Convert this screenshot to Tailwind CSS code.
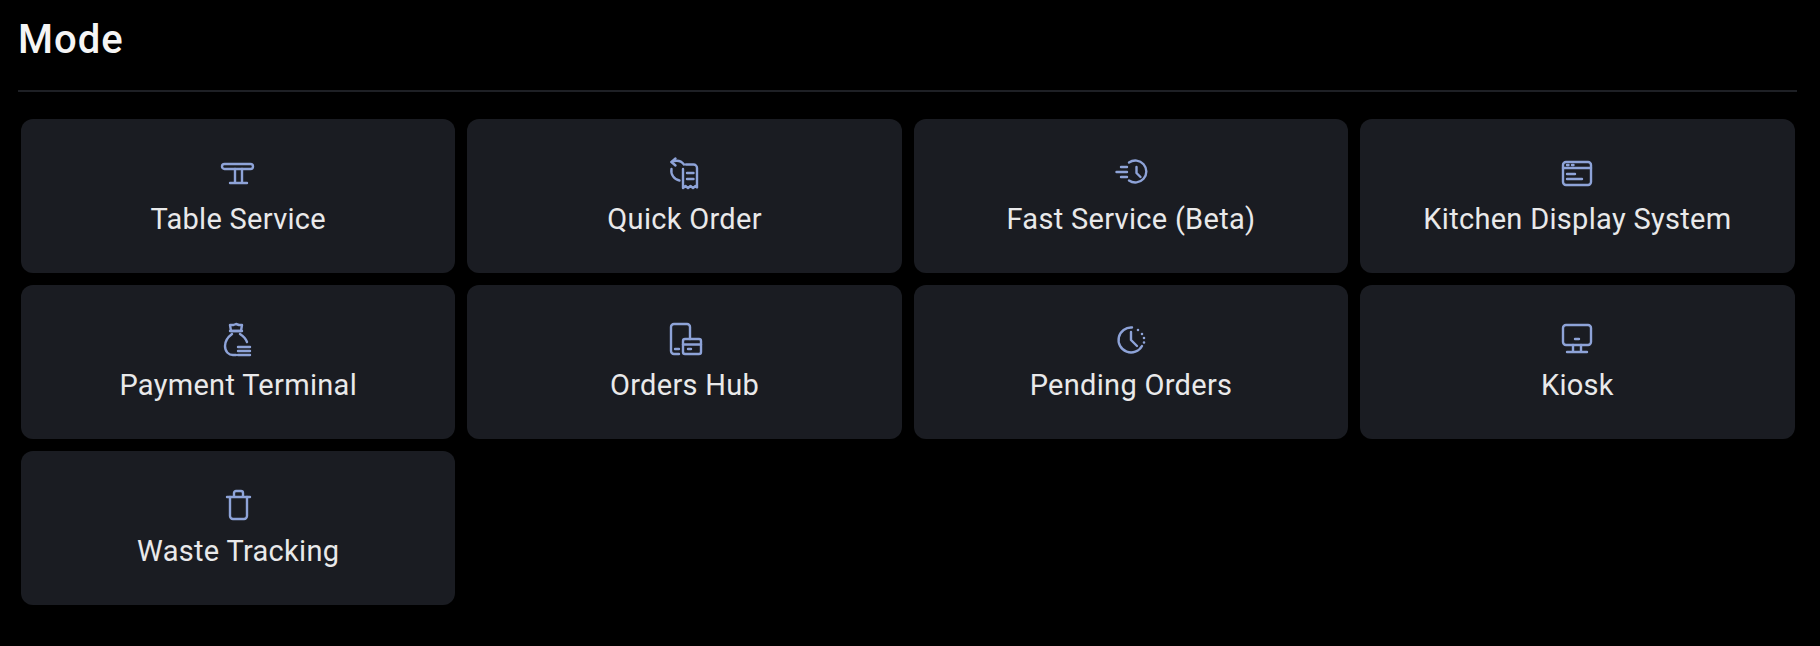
<!DOCTYPE html>
<html>
<head>
<meta charset="utf-8">
<script src="https://cdn.jsdelivr.net/npm/@tailwindcss/browser@4"></script>
</head>
<body class="bg-black">
<main class="w-[1820px] h-[646px] overflow-hidden bg-black font-['Roboto',sans-serif] text-white">
  <h1 class="pl-[18px] pt-[15px] h-[90px] text-[40px] leading-[50px] font-medium tracking-[1px] text-[#f5f5f5]">Mode</h1>
  <div class="ml-[18px] w-[1779px] h-[2px] bg-[#1e2025]"></div>
  <div class="grid grid-cols-[repeat(4,434.4px)] auto-rows-[154px] gap-x-[12px] gap-y-[12px] ml-[21px] mt-[27px]">

    <button class="rounded-xl bg-[#1a1c22] flex flex-col items-center pt-[36px] text-[#e9e9ea]">
      <svg class="size-9 text-[#8ea3d8]" viewBox="0 0 36 36" fill="none" stroke="currentColor" stroke-width="2.400" stroke-linecap="round" stroke-linejoin="round"><rect x="2" y="9" width="31" height="5" rx="2.5"/><path d="M15 14v14M22 14v14M10 28h17"/></svg>
      <span class="mt-[10px] text-[29px] tracking-[0.3px] leading-[36px]">Table Service</span>
    </button>

    <button class="rounded-xl bg-[#1a1c22] flex flex-col items-center pt-[36px] text-[#e9e9ea]">
      <svg class="size-9 text-[#8ea3d8]" viewBox="0 0 36 36" fill="none" stroke="currentColor" stroke-width="2.400" stroke-linecap="round" stroke-linejoin="round"><path d="M16 14v19l2.500-2 2.500 2 2.500-2 2.500 2 2.500-2 1.500 1.500V13a3.500 3.500 0 0 0-3.500-3.500H19"/><path d="M20 18h6.500M20 24h6.500"/><path d="M8.500 3.500 4.500 7l4 3.500"/><path d="M4.500 7C9 5 14 5.500 17 9.500M4.500 14c-1 5.500 2.500 10.500 8 11.500"/></svg>
      <span class="mt-[10px] text-[29px] tracking-[0.3px] leading-[36px]">Quick Order</span>
    </button>

    <button class="rounded-xl bg-[#1a1c22] flex flex-col items-center pt-[36px] text-[#e9e9ea]">
      <svg class="size-9 text-[#8ea3d8]" viewBox="0 0 36 36" fill="none" stroke="currentColor" stroke-width="2.400" stroke-linecap="round" stroke-linejoin="round"><path d="M16 7.500A11 11 0 1 1 16 25.500"/><path d="M23.500 12v6l4 4"/><path d="M8 12h6M3.500 17h10.500M8 22h6"/></svg>
      <span class="mt-[10px] text-[29px] tracking-[0.3px] leading-[36px]">Fast Service (Beta)</span>
    </button>

    <button class="rounded-xl bg-[#1a1c22] flex flex-col items-center pt-[36px] text-[#e9e9ea]">
      <svg class="size-9 text-[#8ea3d8]" viewBox="0 0 36 36" fill="none" stroke="currentColor" stroke-width="2.400" stroke-linecap="round" stroke-linejoin="round"><rect x="4" y="7" width="28" height="23" rx="3"/><path d="M4 13h28M8 10h1.500M13 10h1.500M8 19h8M8 24h15"/></svg>
      <span class="mt-[10px] text-[29px] tracking-[0.3px] leading-[36px]">Kitchen Display System</span>
    </button>

    <button class="rounded-xl bg-[#1a1c22] flex flex-col items-center pt-[36px] text-[#e9e9ea]">
      <svg class="size-9 text-[#8ea3d8]" viewBox="0 0 36 36" fill="none" stroke="currentColor" stroke-width="2.400" stroke-linecap="round" stroke-linejoin="round"><path d="M11 10 10 4h3.500L16 3l3 1h3l-1 6z"/><path d="M10 10h12M12 13c-4 3-7 7-7 12 0 6 4 9 8 9h3M20 13c3 2 6 5 7 8"/><path d="M18 26h12M18 30h12M18 34h12"/></svg>
      <span class="mt-[10px] text-[29px] tracking-[0.3px] leading-[36px]">Payment Terminal</span>
    </button>

    <button class="rounded-xl bg-[#1a1c22] flex flex-col items-center pt-[36px] text-[#e9e9ea]">
      <svg class="size-9 text-[#8ea3d8]" viewBox="0 0 36 36" fill="none" stroke="currentColor" stroke-width="2.400" stroke-linecap="round" stroke-linejoin="round"><path d="M12 33H7a3 3 0 0 1-3-3V6a3 3 0 0 1 3-3h13a3 3 0 0 1 3 3v12"/><path d="M8 28h4"/><rect x="16" y="18" width="18" height="15" rx="2"/><path d="M16 23.500h18M21 28h3"/></svg>
      <span class="mt-[10px] text-[29px] tracking-[0.3px] leading-[36px]">Orders Hub</span>
    </button>

    <button class="rounded-xl bg-[#1a1c22] flex flex-col items-center pt-[36px] text-[#e9e9ea]">
      <svg class="size-9 text-[#8ea3d8]" viewBox="0 0 36 36" fill="none" stroke="currentColor" stroke-width="2.400" stroke-linecap="round" stroke-linejoin="round"><path d="M19 6.500A12.500 12.500 0 1 0 29 25"/><path d="M18 11v8l6 6"/><path d="M25 9h.01M29 13h.01M31 17h.01M31 21.500h.01" stroke-width="2.600"/></svg>
      <span class="mt-[10px] text-[29px] tracking-[0.3px] leading-[36px]">Pending Orders</span>
    </button>

    <button class="rounded-xl bg-[#1a1c22] flex flex-col items-center pt-[36px] text-[#e9e9ea]">
      <svg class="size-9 text-[#8ea3d8]" viewBox="0 0 36 36" fill="none" stroke="currentColor" stroke-width="2.400" stroke-linecap="round" stroke-linejoin="round"><rect x="4" y="4" width="28" height="20" rx="3"/><path d="M16 18h4M14 24v7M22 24v7M8 31h20"/></svg>
      <span class="mt-[10px] text-[29px] tracking-[0.3px] leading-[36px]">Kiosk</span>
    </button>

    <button class="rounded-xl bg-[#1a1c22] flex flex-col items-center pt-[36px] text-[#e9e9ea]">
      <svg class="size-9 text-[#8ea3d8]" viewBox="0 0 36 36" fill="none" stroke="currentColor" stroke-width="2.400" stroke-linecap="round" stroke-linejoin="round"><path d="M7 10h23M14 10V6a2 2 0 0 1 2-2h5a2 2 0 0 1 2 2v4"/><path d="M10 10v19a3 3 0 0 0 3 3h11a3 3 0 0 0 3-3V10"/></svg>
      <span class="mt-[10px] text-[29px] tracking-[0.3px] leading-[36px]">Waste Tracking</span>
    </button>
  </div>
</main>
</body>
</html>
